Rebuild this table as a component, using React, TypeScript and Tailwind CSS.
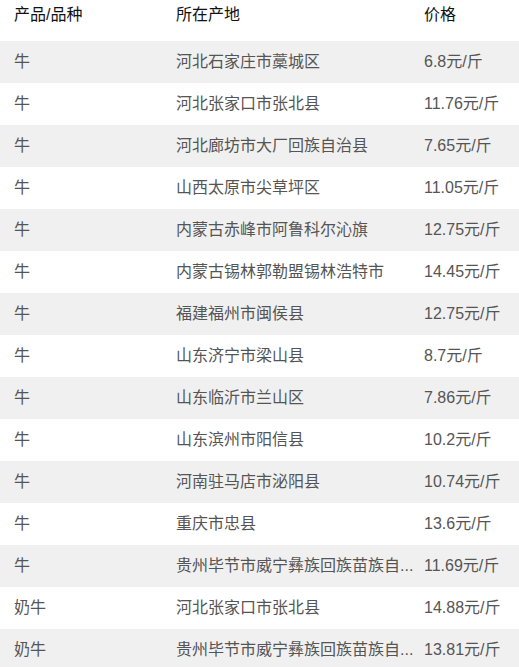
const rows: [string, string, string][] = [
  ["牛", "河北石家庄市藁城区", "6.8元/斤"],
  ["牛", "河北张家口市张北县", "11.76元/斤"],
  ["牛", "河北廊坊市大厂回族自治县", "7.65元/斤"],
  ["牛", "山西太原市尖草坪区", "11.05元/斤"],
  ["牛", "内蒙古赤峰市阿鲁科尔沁旗", "12.75元/斤"],
  ["牛", "内蒙古锡林郭勒盟锡林浩特市", "14.45元/斤"],
  ["牛", "福建福州市闽侯县", "12.75元/斤"],
  ["牛", "山东济宁市梁山县", "8.7元/斤"],
  ["牛", "山东临沂市兰山区", "7.86元/斤"],
  ["牛", "山东滨州市阳信县", "10.2元/斤"],
  ["牛", "河南驻马店市泌阳县", "10.74元/斤"],
  ["牛", "重庆市忠县", "13.6元/斤"],
  // long names are cut as in the source list
  ["牛", "贵州毕节市威宁彝族回族苗族自...", "11.69元/斤"],
  ["奶牛", "河北张家口市张北县", "14.88元/斤"],
  ["奶牛", "贵州毕节市威宁彝族回族苗族自...", "13.81元/斤"],
];

export default function App() {
  return (
    <div className="w-[519px] h-[667px] overflow-hidden bg-white font-['Liberation_Sans','Noto_Sans_CJK_SC',sans-serif] text-[16px]">
      <div className="grid grid-cols-[150px_236px_1fr] gap-x-[12px] pl-[14px] h-[41px] pt-[4px] leading-[22px] text-[#111]">
        <div>产品/品种</div>
        <div>所在产地</div>
        <div>价格</div>
      </div>
      {rows.map((r, i) => (
        <div
          key={i}
          className={
            "grid grid-cols-[150px_236px_1fr] gap-x-[12px] pl-[14px] h-[42px] items-center text-[#555] " +
            (i % 2 === 0 ? "bg-[#f0f0f0]" : "bg-white")
          }
        >
          <div>{r[0]}</div>
          <div className="whitespace-nowrap">{r[1]}</div>
          <div className="whitespace-nowrap">{r[2]}</div>
        </div>
      ))}
    </div>
  );
}
